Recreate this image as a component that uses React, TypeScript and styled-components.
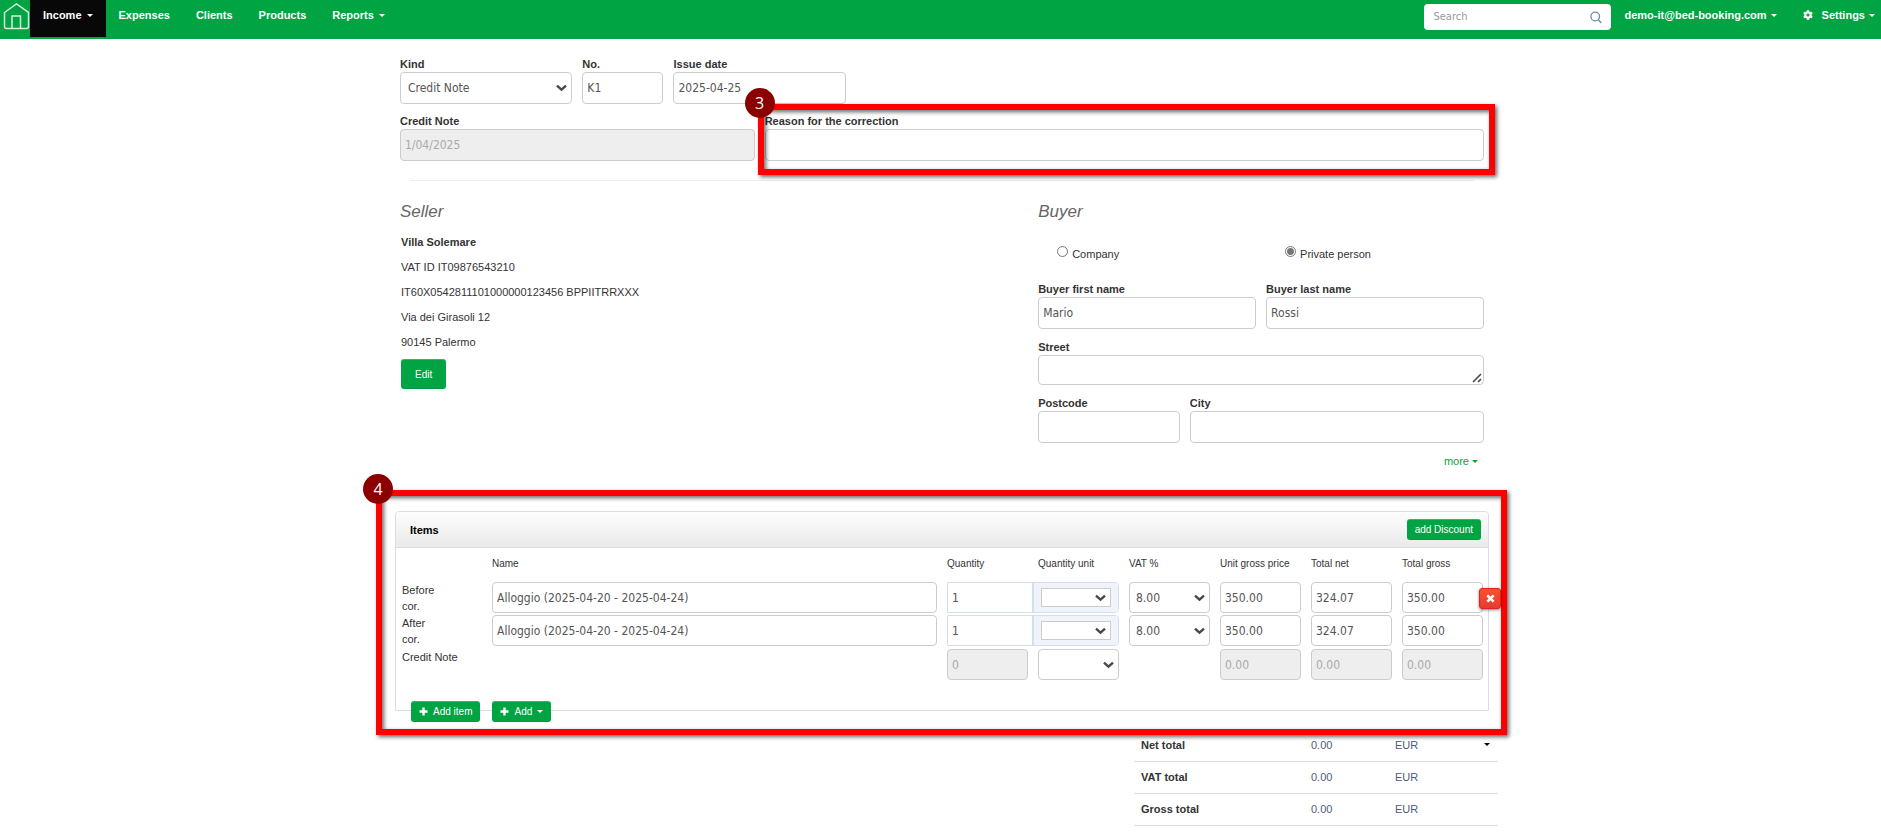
import React, { useId } from 'react';
import styled, { createGlobalStyle, css } from 'styled-components';
import { FaCog } from 'react-icons/fa';

const green = '#00a443';
const textColor = '#333';
const fieldFont = '"DejaVu Sans Condensed", "Noto Sans", sans-serif';

const GlobalStyle = createGlobalStyle`
  * { box-sizing: border-box; }
  body {
    margin: 0;
    background: #fff;
    color: ${textColor};
    font: 11px/16px "Liberation Sans", Arial, sans-serif;
  }
  button, input, select, textarea { font: inherit; color: inherit; margin: 0; }
  p, h2, h3 { margin: 0; }
`;

/* ---------- navigation ---------- */

const NavBar = styled.header`
  display: flex;
  align-items: flex-start;
  height: 39px;
  background: ${green};
  color: #fff;
  font-weight: bold;
`;

const Brand = styled.a`
  display: block;
  width: 30px;
  height: 31px;
  padding: 3px 0 0 3px;
`;

const NavItems = styled.nav`
  display: flex;
  flex: 1;
`;

const NavLink = styled.a<{ $active?: boolean }>`
  display: flex;
  align-items: center;
  gap: 5px;
  height: 37px;
  padding: 0 13px 7px;
  color: #fff;
  text-decoration: none;
  background: ${(p) => (p.$active ? '#080808' : 'transparent')};
`;

const Caret = styled.span`
  width: 0;
  height: 0;
  border: 3px solid transparent;
  border-top-color: currentColor;
  border-bottom: 0;
`;

const SearchForm = styled.form`
  display: flex;
  align-items: center;
  width: 187px;
  height: 26px;
  margin: 4px 0 0;
  padding: 0 9px;
  border-radius: 4px;
  background: #fff;
`;

const SearchInput = styled.input`
  flex: 1;
  min-width: 0;
  padding: 0;
  border: 0;
  outline: 0;
  background: none;
  color: #555;
  font: 11px/16px ${fieldFont};
  &::placeholder { color: #999; opacity: 1; }
`;

const IconButton = styled.button`
  display: flex;
  padding: 0;
  border: 0;
  background: none;
`;

const UserMenu = styled.div`
  display: flex;
  padding-right: 6px;
`;

const MenuButton = styled.button`
  display: flex;
  align-items: center;
  gap: 4px;
  height: 37px;
  padding: 0 0 7px 13px;
  border: 0;
  background: none;
  & + & { margin-left: 13px; }
`;

const MenuIcon = styled.span`
  display: flex;
  margin-right: 5px;
`;

/* ---------- form parts ---------- */

const Page = styled.main`
  max-width: 1111px;
  margin: 0 auto;
  padding: 17px 12px 0 15px;
`;

const Grid = styled.div`
  display: grid;
  grid-template-columns: repeat(12, minmax(0, 1fr));
  column-gap: 10px;
  row-gap: 9px;
`;

const Cell = styled.div<{ $span: number; $start?: number }>`
  position: relative;
  grid-column: ${(p) => (p.$start ? p.$start : 'auto')} / span ${(p) => p.$span};
`;

const FieldLabel = styled.label`
  display: block;
  font-weight: bold;
`;

const fieldBox = css`
  display: block;
  width: 100%;
  border: 1px solid #ccc;
  border-radius: 4px;
  background: #fff;
  color: #555;
  font: 12px/16px ${fieldFont};
  outline: 0;
`;

const TextInput = styled.input<{ $row?: boolean }>`
  ${fieldBox}
  height: ${(p) => (p.$row ? '31px' : '32px')};
  padding: 0 4px;
  &:disabled { background: #eee; color: #aaa; }
`;

const AddressBox = styled.textarea`
  ${fieldBox}
  height: 30px;
  padding: 6px 4px;
  overflow: hidden;
  resize: none;
`;

const TextareaWrap = styled.div`
  position: relative;
`;

const Grip = styled.svg`
  position: absolute;
  right: 2px;
  bottom: 2px;
`;

const SelectWrap = styled.div`
  position: relative;
  width: 100%;
`;

const Select = styled.select<{ $row?: boolean; $inset?: boolean }>`
  ${fieldBox}
  appearance: none;
  height: ${(p) => (p.$inset ? '19px' : p.$row ? '31px' : '32px')};
  padding: 0 20px 0 ${(p) => (p.$row ? '6px' : '7px')};
  border-radius: ${(p) => (p.$inset ? '0' : '4px')};
`;

const Chevron = styled.svg`
  position: absolute;
  top: 50%;
  right: 5px;
  margin-top: -4px;
  pointer-events: none;
`;

const Divider = styled.hr`
  height: 1px;
  margin: 19px 10px;
  border: 0;
  background: #eee;
`;

const SectionTitle = styled.h2`
  color: #666;
  font-size: 17px;
  font-style: italic;
  font-weight: normal;
  line-height: 24px;
`;

const SellerDetails = styled.div`
  display: grid;
  gap: 9px;
  margin: 10px 0;
  padding-left: 1px;
`;

const GreenButton = styled.button<{ $small?: boolean }>`
  display: inline-flex;
  align-items: center;
  justify-content: center;
  gap: 5px;
  height: ${(p) => (p.$small ? '21px' : '30px')};
  padding: ${(p) => (p.$small ? '0 8px' : '2px 14px 0')};
  border: 0;
  border-radius: 3px;
  background: ${green};
  box-shadow: inset 0 1px 0 rgba(255, 255, 255, 0.2), inset 0 -1px 0 rgba(0, 0, 0, 0.05);
  color: #fff;
  font-size: 10px;
`;

const BuyerFields = styled.div`
  display: grid;
  gap: 10px;
`;

const SplitRow = styled.div<{ $columns: string }>`
  display: grid;
  grid-template-columns: ${(p) => p.$columns};
  column-gap: 10px;
`;

const RadioRow = styled(SplitRow)`
  padding: 21px 0 10px;
`;

const RadioLabel = styled.label`
  display: flex;
  gap: 4px;
  padding: 1px 0 0 19px;
  height: 16px;
`;

const Radio = styled.input`
  appearance: none;
  width: 11px;
  height: 11px;
  border: 1px solid #767676;
  border-radius: 50%;
  background: #fff;
  &:checked { background: radial-gradient(circle, #767676 3px, #fff 4px); }
`;

const MoreButton = styled.button`
  display: flex;
  align-items: center;
  justify-self: end;
  gap: 3px;
  margin-right: 6px;
  padding: 0;
  border: 0;
  background: none;
  color: ${green};
`;

/* ---------- items ---------- */

const ItemsArea = styled.section`
  position: relative;
  margin: 42px -5px 0;
`;

const Panel = styled.div`
  border: 1px solid #ddd;
  border-radius: 4px 4px 0 0;
  padding-bottom: 28px;
`;

const PanelHeader = styled.div`
  display: flex;
  align-items: center;
  justify-content: space-between;
  height: 36px;
  padding: 0 7px 0 14px;
  border-bottom: 1px solid #ddd;
  border-radius: 3px 3px 0 0;
  background: linear-gradient(#fdfdfd, #eaeaea);
`;

const PanelTitle = styled.h3`
  color: #000;
  font-size: 11px;
`;

const ItemsTable = styled.table`
  width: 100%;
  border-collapse: collapse;
  table-layout: fixed;
  th, td {
    padding: 0 10px 0 0;
    text-align: left;
    vertical-align: top;
    font-weight: normal;
  }
  thead th { height: 34px; padding-top: 8px; font-size: 10px; white-space: nowrap; }
  tbody tr { height: 33px; }
  tbody th { padding: 0 0 0 6px; }
  tbody td:last-child { position: relative; padding-right: 5px; }
  tbody tr:last-child { height: 34px; }
  tbody tr:last-child > * { padding-top: 1px; }
`;

const LabelColumn = styled.col` width: 96px; `;
const ValueColumn = styled.col` width: 91px; `;
const LastColumn = styled.col` width: 86px; `;

const RowName = styled.span<{ $narrow: boolean }>`
  display: block;
  width: ${(p) => (p.$narrow ? '40px' : 'auto')};
`;

const QuantityGroup = styled.div`
  display: flex;
  border: 1px solid #d3e0ec;
  border-radius: 0 4px 4px 0;
`;

const QuantityInput = styled.input`
  flex: 1;
  min-width: 0;
  height: 29px;
  padding: 0 4px;
  border: 0;
  background: #fff;
  color: #555;
  font: 12px/16px ${fieldFont};
`;

const UnitAddon = styled.div`
  display: flex;
  align-items: center;
  width: 86px;
  padding: 0 7px;
  border-left: 2px solid #d3e0ec;
  border-radius: 0 3px 3px 0;
  background: #f0f4fa;
`;

const RemoveButton = styled.button`
  position: absolute;
  z-index: 2;
  top: 6px;
  right: -13px;
  display: flex;
  align-items: center;
  justify-content: center;
  width: 22px;
  height: 21px;
  padding: 0;
  border: 1px solid #d9261c;
  border-radius: 3px;
  background: linear-gradient(#f9502f, #e83a30);
  box-shadow: 0 1px 3px rgba(0, 0, 0, 0.5);
`;

const Actions = styled.div`
  position: relative;
  display: flex;
  gap: 12px;
  margin: -10px 16px 0;
`;

const Totals = styled.table`
  width: 364px;
  margin: 7px -14px 12px auto;
  border-collapse: collapse;
  table-layout: fixed;
  th, td {
    height: 32px;
    padding: 0;
    border-bottom: 1px solid #ddd;
    text-align: left;
    color: #4f5b76;
  }
  th { width: 177px; padding-left: 7px; color: ${textColor}; }
`;

const AmountCell = styled.td` width: 84px; `;
const ToggleCell = styled.td` width: 14px; `;

const CaretButton = styled(IconButton)` color: #000; `;

/* ---------- step markers ---------- */

const Highlight = styled.div<{ $inset: string }>`
  position: absolute;
  z-index: 1;
  inset: ${(p) => p.$inset};
  border: 6px solid #fe0000;
  box-shadow: 2px 2px 4px rgba(0, 0, 0, 0.6), inset 2px 2px 4px rgba(0, 0, 0, 0.6);
  pointer-events: none;
`;

const StepBadge = styled.span`
  position: absolute;
  top: -22px;
  left: -19px;
  width: 30px;
  height: 30px;
  border-radius: 50%;
  background: #8b0000;
  color: #fff;
  font: 16px/30px "Open Sans", sans-serif;
  text-align: center;
`;

function StepMarker({ step, inset }: { step: number; inset: string }) {
  return (
    <Highlight $inset={inset}>
      <StepBadge>{step}</StepBadge>
    </Highlight>
  );
}

function Arrow() {
  return (
    <Chevron width="11" height="8" viewBox="0 0 11 8" aria-hidden="true">
      <path d="M1 1.7 5.5 5.7 10 1.7" fill="none" stroke="#484848" strokeWidth="2.4" />
    </Chevron>
  );
}

function Plus() {
  return (
    <svg width="9" height="9" viewBox="0 0 9 9" aria-hidden="true">
      <path d="M4.5 .5V8.5M.5 4.5H8.5" stroke="#fff" strokeWidth="2.4" />
    </svg>
  );
}

function Field({ label, value = '', disabled }: { label: string; value?: string; disabled?: boolean }) {
  const id = useId();
  return (
    <div>
      <FieldLabel htmlFor={id}>{label}</FieldLabel>
      <TextInput id={id} defaultValue={value} disabled={disabled} />
    </div>
  );
}

function UnitSelect({ label, inset }: { label: string; inset?: boolean }) {
  return (
    <SelectWrap>
      <Select aria-label={label} $row $inset={inset}>
        <option />
      </Select>
      <Arrow />
    </SelectWrap>
  );
}

function CorrectionRow({ name, removable }: { name: string; removable?: boolean }) {
  return (
    <tr>
      <th scope="row"><RowName $narrow>{name}</RowName></th>
      <td><TextInput $row aria-label={`${name} name`} defaultValue="Alloggio (2025-04-20 - 2025-04-24)" /></td>
      <td colSpan={2}>
        <QuantityGroup>
          <QuantityInput aria-label={`${name} quantity`} defaultValue="1" />
          <UnitAddon><UnitSelect inset label={`${name} quantity unit`} /></UnitAddon>
        </QuantityGroup>
      </td>
      <td>
        <SelectWrap>
          <Select $row aria-label={`${name} VAT`}><option>8.00</option></Select>
          <Arrow />
        </SelectWrap>
      </td>
      {['350.00', '324.07', '350.00'].map((amount, i) => (
        <td key={i}>
          <TextInput $row aria-label={`${name} ${['unit gross price', 'total net', 'total gross'][i]}`} defaultValue={amount} />
          {removable && i === 2 && (
            <RemoveButton type="button" aria-label="Remove item">
              <svg width="9" height="9" viewBox="0 0 9 9">
                <path d="M1.3 1.3 7.7 7.7M7.7 1.3 1.3 7.7" stroke="#fff" strokeWidth="2.6" />
              </svg>
            </RemoveButton>
          )}
        </td>
      ))}
    </tr>
  );
}

export default function App() {
  const headings = ['Name', 'Quantity', 'Quantity unit', 'VAT %', 'Unit gross price', 'Total net', 'Total gross'];
  return (
    <>
      <GlobalStyle />
      <NavBar>
        <Brand href="#" aria-label="Home">
          <svg width="27" height="27" viewBox="0 0 27 27" fill="none" stroke="#d5f0df" strokeWidth="1.5">
            <path d="M1.5 9.5 13.5 1 25.5 9.5V23.5Q25.5 25.5 23.5 25.5H3.5Q1.5 25.5 1.5 23.5Z" />
            <path d="M9 25.5V13H17.5V25.5" />
          </svg>
        </Brand>
        <NavItems>
          <NavLink href="#" $active>Income <Caret /></NavLink>
          <NavLink href="#">Expenses</NavLink>
          <NavLink href="#">Clients</NavLink>
          <NavLink href="#">Products</NavLink>
          <NavLink href="#">Reports <Caret /></NavLink>
        </NavItems>
        <SearchForm>
          <SearchInput type="text" placeholder="Search" aria-label="Search" />
          <IconButton type="button" aria-label="Run search">
            <svg width="12" height="13" viewBox="0 0 12 13" fill="none" stroke="#7088a5" strokeWidth="1.3">
              <circle cx="5.2" cy="5.5" r="4.3" />
              <path d="M8.3 8.8 11.3 12" />
            </svg>
          </IconButton>
        </SearchForm>
        <UserMenu>
          <MenuButton type="button">demo-it@bed-booking.com <Caret /></MenuButton>
          <MenuButton type="button"><MenuIcon><FaCog size={10} /></MenuIcon>Settings <Caret /></MenuButton>
        </UserMenu>
      </NavBar>

      <Page>
        <Grid>
          <Cell $span={2}>
            <FieldLabel htmlFor="kind">Kind</FieldLabel>
            <SelectWrap>
              <Select id="kind"><option>Credit Note</option></Select>
              <Arrow />
            </SelectWrap>
          </Cell>
          <Cell $span={1}><Field label="No." value="K1" /></Cell>
          <Cell $span={2}><Field label="Issue date" value="2025-04-25" /></Cell>
          <Cell $span={4} $start={1}><Field label="Credit Note" value="1/04/2025" disabled /></Cell>
          <Cell $span={8}>
            <Field label="Reason for the correction" />
            <StepMarker step={3} inset="-9px -11px -14px -7px" />
          </Cell>
        </Grid>

        <Divider />

        <Grid>
          <Cell $span={6}>
            <SectionTitle>Seller</SectionTitle>
            <SellerDetails>
              <p><strong>Villa Solemare</strong></p>
              <p>VAT ID IT09876543210</p>
              <p>IT60X0542811101000000123456 BPPIITRRXXX</p>
              <p>Via dei Girasoli 12</p>
              <p>90145 Palermo</p>
              <div><GreenButton type="button">Edit</GreenButton></div>
            </SellerDetails>
          </Cell>
          <Cell $span={5} $start={8}>
            <SectionTitle>Buyer</SectionTitle>
            <BuyerFields>
              <RadioRow $columns="1fr 1fr">
                <RadioLabel><Radio type="radio" name="buyer" />Company</RadioLabel>
                <RadioLabel><Radio type="radio" name="buyer" defaultChecked />Private person</RadioLabel>
              </RadioRow>
              <SplitRow $columns="1fr 1fr">
                <Field label="Buyer first name" value="Mario" />
                <Field label="Buyer last name" value="Rossi" />
              </SplitRow>
              <div>
                <FieldLabel htmlFor="street">Street</FieldLabel>
                <TextareaWrap>
                  <AddressBox id="street" rows={1} />
                  <Grip width="10" height="10" viewBox="0 0 10 10" stroke="#444" strokeWidth="1.6" aria-hidden="true">
                    <path d="M1 9 9 1M6 9 9 6" />
                  </Grip>
                </TextareaWrap>
              </div>
              <SplitRow $columns="13fr 27fr">
                <Field label="Postcode" />
                <Field label="City" />
              </SplitRow>
              <MoreButton type="button">more <Caret /></MoreButton>
            </BuyerFields>
          </Cell>
        </Grid>

        <ItemsArea>
          <Panel>
            <PanelHeader>
              <PanelTitle>Items</PanelTitle>
              <GreenButton type="button" $small>add Discount</GreenButton>
            </PanelHeader>
            <ItemsTable>
              <colgroup>
                <LabelColumn />
                <col />
                <ValueColumn /><ValueColumn /><ValueColumn /><ValueColumn /><ValueColumn />
                <LastColumn />
              </colgroup>
              <thead>
                <tr>
                  <th />
                  {headings.map((h) => <th key={h} scope="col">{h}</th>)}
                </tr>
              </thead>
              <tbody>
                <CorrectionRow name="Before cor." removable />
                <CorrectionRow name="After cor." />
                <tr>
                  <th scope="row"><RowName $narrow={false}>Credit Note</RowName></th>
                  <td />
                  <td><TextInput $row disabled aria-label="Credit note quantity" defaultValue="0" /></td>
                  <td><UnitSelect label="Credit note quantity unit" /></td>
                  <td />
                  <td><TextInput $row disabled aria-label="Credit note unit gross price" defaultValue="0.00" /></td>
                  <td><TextInput $row disabled aria-label="Credit note total net" defaultValue="0.00" /></td>
                  <td><TextInput $row disabled aria-label="Credit note total gross" defaultValue="0.00" /></td>
                </tr>
              </tbody>
            </ItemsTable>
          </Panel>
          <Actions>
            <GreenButton type="button" $small><Plus />Add item</GreenButton>
            <GreenButton type="button" $small><Plus />Add <Caret /></GreenButton>
          </Actions>
          <StepMarker step={4} inset="-21px -18px -13px -19px" />
        </ItemsArea>

        <Totals>
          <tbody>
            {['Net total', 'VAT total', 'Gross total'].map((label, i) => (
              <tr key={label}>
                <th scope="row">{label}</th>
                <AmountCell>0.00</AmountCell>
                <td>EUR</td>
                <ToggleCell>
                  {i === 0 && <CaretButton type="button" aria-label="Choose currency"><Caret /></CaretButton>}
                </ToggleCell>
              </tr>
            ))}
          </tbody>
        </Totals>
      </Page>
    </>
  );
}
